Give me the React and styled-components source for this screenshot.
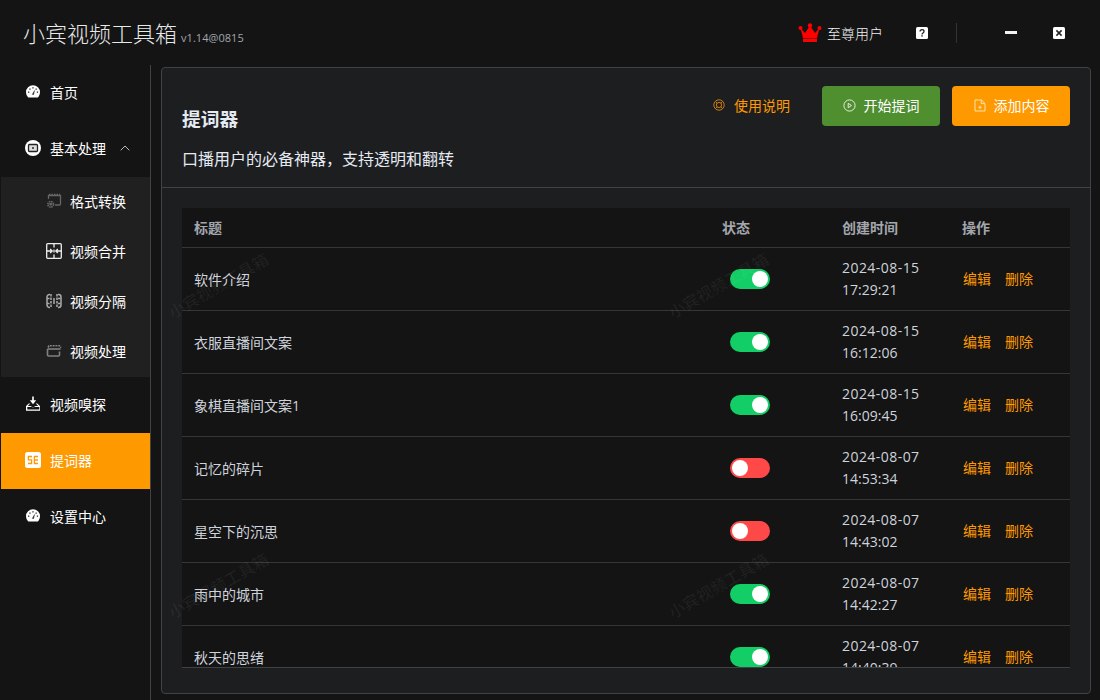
import React from 'react';
import styled, { createGlobalStyle } from 'styled-components';

const FONT = `"Open Sans", "Noto Sans CJK SC", sans-serif`;

const GlobalStyle = createGlobalStyle`
  html, body { margin: 0; padding: 0; background: #141414; }
  * { box-sizing: border-box; }
  body { font-family: ${FONT}; color: #e5eaf3; }
`;

const rows = [
  { title: '软件介绍', on: true, date: '2024-08-15', time: '17:29:21' },
  { title: '衣服直播间文案', on: true, date: '2024-08-15', time: '16:12:06' },
  { title: '象棋直播间文案1', on: true, date: '2024-08-15', time: '16:09:45' },
  { title: '记忆的碎片', on: false, date: '2024-08-07', time: '14:53:34' },
  { title: '星空下的沉思', on: false, date: '2024-08-07', time: '14:43:02' },
  { title: '雨中的城市', on: true, date: '2024-08-07', time: '14:42:27' },
  { title: '秋天的思绪', on: true, date: '2024-08-07', time: '14:40:39' },
];

const Gauge = () => (
  <svg width="16" height="16" viewBox="0 0 16 16">
    <path d="M8 1.200a7 7 0 0 1 7 7c0 2-.8 3.900-2.200 5.300H3.200A7.400 7.400 0 0 1 1 8.200a7 7 0 0 1 7-7z" fill="#fff" />
    <g fill="#333">
      <rect x="3" y="7.500" width="1.300" height="1.300" />
      <rect x="4.300" y="4.500" width="1.300" height="1.300" />
      <rect x="7.300" y="3.200" width="1.300" height="1.300" />
      <rect x="10.500" y="4.500" width="1.300" height="1.300" />
      <rect x="11.800" y="7.500" width="1.300" height="1.300" />
      <path d="M7 10.500 9.400 6.200l.5.300L8.700 11z" />
    </g>
  </svg>
);

const BasicIcon = () => (
  <svg width="16" height="16" viewBox="0 0 16 16">
    <circle cx="8" cy="8" r="8" fill="#fff" />
    <rect x="3.500" y="4.500" width="9" height="7" rx="1" fill="#ddd" stroke="#222" strokeWidth="1.300" />
    <rect x="7" y="7" width="2" height="2" fill="#555" />
  </svg>
);

const FormatIcon = () => (
  <svg width="16" height="16" viewBox="0 0 16 16" fill="none" stroke="#666" strokeWidth="1.300">
    <path d="M2.500 6V2.500h12v8.500c0 .6-.4 1-1 1H9" />
    <path d="M3 1.500h11" strokeDasharray="1.500 1" />
    <circle cx="4.700" cy="11.300" r="2.800" strokeWidth="1.700" strokeDasharray="1.500 .7" />
    <circle cx="4.700" cy="11.300" r=".8" />
  </svg>
);

const MergeIcon = () => (
  <svg width="16" height="16" viewBox="0 0 16 16" fill="none" stroke="#eee" strokeWidth="1.300">
    <rect x=".7" y=".7" width="14.600" height="14.600" rx="1" />
    <path d="M8 1v3.500M8 6.500v3M8 11.500V15" />
    <path d="M1 8h5M4.200 6 6.200 8l-2 2M15 8h-5M11.800 6l-2 2 2 2" />
  </svg>
);

const SplitIcon = () => (
  <svg width="16" height="16" viewBox="0 0 16 16" fill="none" stroke="#aaa" strokeWidth="1.500">
    <path d="M4 1.500h-.5a2.500 2.500 0 0 0-2.500 2.500v8a2.500 2.500 0 0 0 2.500 2.500H4M12 1.500h.5A2.500 2.500 0 0 1 15 4v8a2.500 2.500 0 0 1-2.500 2.500H12" />
    <path d="M5 1v14M11 1v14M1 5.500h3M1 10.500h3M12 5.500h3M12 10.500h3" strokeDasharray="2.500 1" />
    <path d="M8 5v6" />
  </svg>
);

const ClipIcon = () => (
  <svg width="16" height="16" viewBox="0 0 16 16" fill="none" stroke="#808080" strokeWidth="1.600">
    <path d="M1.500 6v6c0 .6.4 1 1 1h10c.6 0 1-.4 1-1V8.500" />
    <path d="M1.500 6h13" />
    <path d="M2 4.500 3 2.800h10.500l1.500 2" strokeDasharray="2 .8" />
  </svg>
);

const SniffIcon = () => (
  <svg width="16" height="16" viewBox="0 0 16 16">
    <path d="M8 .5v5" stroke="#fff" strokeWidth="1.600" fill="none" />
    <path d="M4.800 4.300 8 8.200l3.200-3.900z" fill="#fff" />
    <path d="M3.800 7.500 1 10v4.800h14V10l-2.800-2.500h-1.500L13.200 10H10.500L8 11.500 5.500 10H2.800l2.500-2.500zM2.300 11h12v2.500h-12z" fill="#fff" fillRule="evenodd" />
  </svg>
);

const PrompterIcon = () => (
  <svg width="16" height="16" viewBox="0 0 16 16">
    <rect width="16" height="16" rx="2.500" fill="#fff" />
    <g fill="none" stroke="#ff9900" strokeWidth="1.300">
      <path d="M7 4.500H3.400v3.400h3.200v3.600H3" />
      <path d="M13 4.500H9.400v7H13M9.400 8H13" />
    </g>
  </svg>
);

const Crown = () => (
  <svg width="24" height="20" viewBox="0 0 24 20">
    <circle cx="2.500" cy="5" r="2" fill="#f00" />
    <circle cx="12" cy="2.500" r="2.200" fill="#f00" />
    <circle cx="21.500" cy="5" r="2" fill="#f00" />
    <path d="M2.500 5 7 10l5-7.500L17 10l4.500-5L19 15H5z" fill="#f00" />
    <rect x="5" y="15.500" width="14" height="3.500" fill="#f00" />
  </svg>
);

const HelpIcon = () => (
  <svg width="12" height="12" viewBox="0 0 12 12">
    <rect width="12" height="12" rx="1.500" fill="#fff" />
    <path d="M4 4.600c0-1.200.9-1.900 2-1.900s2 .7 2 1.700c0 1.500-2 1.500-2 3" fill="none" stroke="#222" strokeWidth="1.300" />
    <rect x="5.300" y="8.200" width="1.400" height="1.400" fill="#222" />
  </svg>
);

const CloseIcon = () => (
  <svg width="12" height="12" viewBox="0 0 12 12">
    <rect width="12" height="12" rx="1.500" fill="#fff" />
    <path d="M3.400 3.400l5.200 5.200M8.600 3.400 3.400 8.600" stroke="#222" strokeWidth="1.500" />
  </svg>
);

const LifeIcon = () => (
  <svg width="12" height="12" viewBox="0 0 12 12" fill="none" stroke="#c97a10" strokeWidth="1">
    <circle cx="6" cy="6" r="5.200" />
    <circle cx="6" cy="6" r="2.600" />
    <path d="M2.400 2.400l1.800 1.800M9.600 2.400 7.800 4.200M2.400 9.600l1.800-1.800M9.600 9.600 7.800 7.800" />
  </svg>
);

const PlayIcon = () => (
  <svg width="13" height="13" viewBox="0 0 13 13" fill="none" stroke="#e4eedd" strokeWidth="1">
    <circle cx="6.500" cy="6.500" r="5.600" />
    <path d="M5.200 4.300v4.400l3.300-2.200z" />
  </svg>
);

const FileAddIcon = () => (
  <svg width="13" height="13" viewBox="-1 0 13 13" fill="none" stroke="#ffe2b0" strokeWidth="1">
    <path d="M1 1h6.400L11 4.600V12H1z" />
    <path d="M7.200 1v3.600H11M6 6.600v3.400M4.300 8.300h3.400" />
  </svg>
);

const Shell = styled.div`
  position: relative;
  width: 1100px;
  height: 700px;
  overflow: hidden;
  display: flex;
  flex-direction: column;
  background: #141414;
`;

const TitleBar = styled.header`
  height: 65px;
  flex: none;
  display: flex;
  align-items: center;
  padding: 0 35px 0 23px;
`;

const Brand = styled.div`
  display: flex;
  align-items: baseline;
  padding-top: 1px;
`;

const AppName = styled.h1`
  margin: 0;
  font-size: 22px;
  font-weight: 300;
  line-height: 32px;
  color: #e8e8e8;
`;

const Version = styled.span`
  margin-left: 4px;
  font-size: 11px;
  letter-spacing: 0.05px;
  color: #a3a6ad;
`;

const TitleRight = styled.div`
  margin-left: auto;
  display: flex;
  align-items: center;
`;

const UserTag = styled.div`
  display: flex;
  align-items: center;
  gap: 5px;
  font-size: 14px;
  font-weight: 300;
  color: #f0f0f0;
`;

const WinButton = styled.span`
  display: flex;
  align-items: center;
  margin-left: ${(p) => p.$gap}px;
`;

const Divider = styled.span`
  width: 1px;
  height: 20px;
  margin-left: 28px;
  background: #333;
`;

const MinBar = styled.span`
  display: block;
  width: 12px;
  height: 3px;
  background: #f2f2f2;
`;

const Body = styled.div`
  flex: 1;
  min-height: 0;
  display: flex;
`;

const Sidebar = styled.nav`
  width: 151px;
  flex: none;
  padding-left: 1px;
  border-right: 1px solid #414243;
`;

const NavItem = styled.div`
  height: 56px;
  display: flex;
  align-items: center;
  gap: 9px;
  padding: 0 0 2px 24px;
  font-size: 14px;
  color: #fff;
  background: ${(p) => (p.$active ? '#ff9900' : 'transparent')};
`;

const Chevron = styled.svg`
  margin-left: 5px;
`;

const SubMenu = styled.div`
  background: #202020;
`;

const SubItem = styled.div`
  height: 50px;
  display: flex;
  align-items: center;
  gap: 8px;
  padding: 0 0 2px 45px;
  font-size: 14px;
  color: #fff;
`;

const Main = styled.main`
  flex: 1;
  min-width: 0;
  padding: 2px 9px 6px 10px;
  display: flex;
`;

const Card = styled.section`
  flex: 1;
  min-width: 0;
  display: flex;
  flex-direction: column;
  background: #1d1e20;
  border: 1px solid #414243;
  border-radius: 4px;
  overflow: hidden;
`;

const CardHead = styled.div`
  height: 120px;
  flex: none;
  padding: 0 20px;
  border-bottom: 1px solid #414243;
`;

const HeadTop = styled.div`
  display: flex;
  align-items: flex-start;
  justify-content: space-between;
  padding-top: 18px;
`;

const CardTitle = styled.h2`
  margin: 19px 0 0;
  font-size: 18.72px;
  line-height: 28px;
  font-weight: 700;
  color: #e5eaf3;
`;

const CardDesc = styled.p`
  margin: 14px 0 0;
  font-size: 16px;
  line-height: 24px;
  color: #e5eaf3;
`;

const Actions = styled.div`
  display: flex;
  align-items: center;
  gap: 12px;
`;

const HelpLink = styled.a`
  display: flex;
  align-items: center;
  gap: 9px;
  margin: -3px 20px 0 0;
  font-size: 14px;
  color: #ff9900;
`;

const ActionButton = styled.button`
  width: 118px;
  height: 40px;
  display: flex;
  align-items: center;
  justify-content: center;
  gap: 8px;
  padding: 0 0 2px;
  border: none;
  border-radius: 4px;
  font-family: inherit;
  font-size: 14px;
  color: #fff;
  background: ${(p) => p.$bg};
`;

const TableWrap = styled.div`
  flex: 1;
  min-height: 0;
  margin: 20px 20px 25px;
  overflow: hidden;
  background: #141414;
  border-bottom: 1px solid #414243;
`;

const Row = styled.div`
  display: grid;
  grid-template-columns: 528px 120px 120px 120px;
  height: ${(p) => (p.$head ? 40 : 63)}px;
  align-items: center;
  border-bottom: 1px solid #363637;
`;

const Cell = styled.div`
  padding: 0 12px;
  font-size: 14px;
  line-height: 22px;
  color: ${(p) => (p.$head ? '#a3a6ad' : '#cfd3dc')};
  font-weight: ${(p) => (p.$head ? 700 : 400)};
`;

const TitleCell = styled(Cell)`
  padding-top: 2px;
`;

const DateLine = styled.span`
  display: block;
  letter-spacing: 0.45px;
`;

const Switch = styled.span`
  display: block;
  position: relative;
  width: 40px;
  height: 20px;
  margin-left: 8px;
  border-radius: 10px;
  background: ${(p) => (p.$on ? '#13ce66' : '#ff4949')};

  &::after {
    content: '';
    position: absolute;
    top: 2px;
    left: ${(p) => (p.$on ? 22 : 2)}px;
    width: 16px;
    height: 16px;
    border-radius: 50%;
    background: #fff;
  }
`;

const OpCell = styled(Cell)`
  display: flex;
  gap: 14px;
  padding-left: 13px;
  color: #ff9900;
`;

const Watermark = styled.span`
  position: absolute;
  left: ${(p) => p.$x}px;
  top: ${(p) => p.$y}px;
  transform: translate(-50%, -50%) rotate(-30deg);
  font-size: 16px;
  font-weight: 500;
  white-space: nowrap;
  color: rgba(255, 255, 255, 0.06);
  pointer-events: none;
`;

const marks = [[218, 285], [718, 285], [218, 585], [718, 585]];

export default function App() {
  return (
    <Shell>
      <GlobalStyle />
      <TitleBar>
        <Brand>
          <AppName>小宾视频工具箱</AppName>
          <Version>v1.14@0815</Version>
        </Brand>
        <TitleRight>
          <UserTag><Crown />至尊用户</UserTag>
          <WinButton $gap={33}><HelpIcon /></WinButton>
          <Divider />
          <WinButton $gap={48}><MinBar /></WinButton>
          <WinButton $gap={36}><CloseIcon /></WinButton>
        </TitleRight>
      </TitleBar>
      <Body>
        <Sidebar>
          <NavItem><Gauge />首页</NavItem>
          <NavItem>
            <BasicIcon />基本处理
            <Chevron width="10" height="6" viewBox="0 0 10 6" fill="none" stroke="#bbb" strokeWidth="1"><path d="M.7 5.300 5 1l4.300 4.300" /></Chevron>
          </NavItem>
          <SubMenu>
            <SubItem><FormatIcon />格式转换</SubItem>
            <SubItem><MergeIcon />视频合并</SubItem>
            <SubItem><SplitIcon />视频分隔</SubItem>
            <SubItem><ClipIcon />视频处理</SubItem>
          </SubMenu>
          <NavItem><SniffIcon />视频嗅探</NavItem>
          <NavItem $active><PrompterIcon />提词器</NavItem>
          <NavItem><Gauge />设置中心</NavItem>
        </Sidebar>
        <Main>
          <Card>
            <CardHead>
              <HeadTop>
                <div>
                  <CardTitle>提词器</CardTitle>
                  <CardDesc>口播用户的必备神器，支持透明和翻转</CardDesc>
                </div>
                <Actions>
                  <HelpLink><LifeIcon />使用说明</HelpLink>
                  <ActionButton $bg="#4f8f30"><PlayIcon />开始提词</ActionButton>
                  <ActionButton $bg="#ff9900"><FileAddIcon />添加内容</ActionButton>
                </Actions>
              </HeadTop>
            </CardHead>
            <TableWrap>
              <Row $head>
                <Cell $head>标题</Cell>
                <Cell $head>状态</Cell>
                <Cell $head>创建时间</Cell>
                <Cell $head>操作</Cell>
              </Row>
              {rows.map((r) => (
                <Row key={r.title}>
                  <TitleCell>{r.title}</TitleCell>
                  <Cell><Switch $on={r.on} /></Cell>
                  <Cell><DateLine>{r.date}</DateLine>{r.time}</Cell>
                  <OpCell><span>编辑</span><span>删除</span></OpCell>
                </Row>
              ))}
            </TableWrap>
          </Card>
        </Main>
      </Body>
      {marks.map(([x, y]) => (
        <Watermark key={`${x}-${y}`} $x={x} $y={y}>小宾视频工具箱</Watermark>
      ))}
    </Shell>
  );
}
